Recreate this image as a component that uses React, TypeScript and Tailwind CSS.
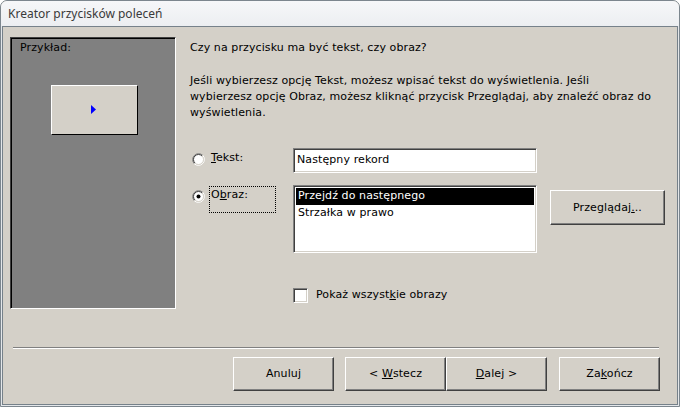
import React from 'react'

const ui = "font-['DejaVu_Sans',sans-serif] text-[11px] leading-[16px] tracking-[0.1px] text-black"

// classic 3D edges
const raised =
  'border border-t-white border-l-white border-r-[#404040] border-b-[#404040] shadow-[inset_-1px_-1px_0_#808080] bg-[#d4d0c8]'
const sunken =
  'border border-t-[#808080] border-l-[#808080] border-r-white border-b-white shadow-[inset_1px_1px_0_#404040,inset_-1px_-1px_0_#d4d0c8]'

function Radio({ checked }: { checked?: boolean }) {
  const d = 4.24
  return (
    <svg width="13" height="13" viewBox="0 0 13 13" className="block">
      <circle cx="6.5" cy="6.5" r="5" fill="#fff" />
      <path d={`M${6.5 - d} ${6.5 + d}A6 6 0 0 1 ${6.5 + d} ${6.5 - d}`} stroke="#808080" fill="none" />
      <path d={`M${6.5 + d} ${6.5 - d}A6 6 0 0 1 ${6.5 - d} ${6.5 + d}`} stroke="#ffffff" fill="none" />
      <path d={`M${6.5 - 3.54} ${6.5 + 3.54}A5 5 0 0 1 ${6.5 + 3.54} ${6.5 - 3.54}`} stroke="#404040" fill="none" />
      <path d={`M${6.5 + 3.54} ${6.5 - 3.54}A5 5 0 0 1 ${6.5 - 3.54} ${6.5 + 3.54}`} stroke="#d4d0c8" fill="none" />
      {checked && <circle cx="6.5" cy="6.5" r="2" fill="#000" />}
    </svg>
  )
}

function Button({ children, className = '' }: { children: React.ReactNode; className?: string }) {
  return (
    <div className={`${raised} flex h-[34px] w-[101px] items-center justify-center ${className}`}>
      <span>{children}</span>
    </div>
  )
}

export default function App() {
  return (
    <div className={`${ui} flex h-[407px] w-[680px] flex-col overflow-hidden rounded-t-[7px] border border-[#7c868e] bg-[#d4d0c8]`}>
      {/* title bar */}
      <div className="flex h-[25px] shrink-0 items-center bg-gradient-to-b from-[#f6f7f9] to-[#eceef1] pl-[7px] font-['Noto_Sans',sans-serif] text-[12px] tracking-normal text-[#3a3a3a]">
        Kreator przycisków poleceń
      </div>

      <div className="flex flex-1 flex-col border-x border-b border-[#e4e7ea]">
        <div className="flex flex-1 flex-col border border-[#76818a] pl-[7px] pt-[10px]">
          <div className="flex h-[272px]">
            {/* preview */}
            <div className="flex w-[166px] flex-col border border-t-[#404040] border-l-[#404040] border-r-white border-b-white bg-[#808080] shadow-[inset_1px_1px_0_#000] pl-[9px] pt-[2px]">
              <div>Przykład:</div>
              <div className="ml-[31px] mt-[29px] flex h-[50px] w-[87px] items-center justify-center border border-t-white border-l-white border-r-black border-b-black bg-[#d4d0c8]">
                <svg width="5" height="9" viewBox="0 0 5 9" className="-ml-[2px] -mt-[2px]">
                  <path d="M0 0L5 4.5L0 9Z" fill="#0000ff" />
                </svg>
              </div>
            </div>

            {/* options */}
            <div className="ml-[14px] flex flex-col pt-[3px]">
              <div>Czy na przycisku ma być tekst, czy obraz?</div>
              <div className="mt-[17px] whitespace-nowrap">
                Jeśli wybierzesz opcję Tekst, możesz wpisać tekst do wyświetlenia. Jeśli
                <br />
                wybierzesz opcję Obraz, możesz kliknąć przycisk Przeglądaj, aby znaleźć obraz do
                <br />
                wyświetlenia.
              </div>

              <div className="mt-[27px] flex items-start pl-[2px]">
                <div className="mt-[5px]">
                  <Radio />
                </div>
                <div className="ml-[4px] mt-[2px] w-[67px] pl-[2px]">
                  <span className="underline">T</span>ekst:
                </div>
                <div className={`${sunken} ml-[17px] h-[25px] w-[244px] bg-white pl-[3px] pt-[3px]`}>
                  Następny rekord
                </div>
              </div>

              <div className="mt-[12px] flex items-start pl-[2px]">
                <div className="mt-[5px]">
                  <Radio checked />
                </div>
                <div className="ml-[4px] mt-[1px] h-[27px] w-[67px] border border-dotted border-black pl-[1px]">
                  O<span className="underline">b</span>raz:
                </div>
                <div className={`${sunken} ml-[17px] h-[68px] w-[244px] bg-white p-[2px]`}>
                  <div className="h-[17px] bg-black pl-[2px] text-white">Przejdź do następnego</div>
                  <div className="h-[17px] pl-[2px]">Strzałka w prawo</div>
                </div>
                <div className={`${raised} ml-[13px] mt-[5px] flex h-[35px] w-[115px] items-center justify-center`}>
                  <span>
                    Przeglądaj<span className="underline">.</span>..
                  </span>
                </div>
              </div>

              <div className="ml-[103px] mt-[34px] flex items-center">
                <div className={`${sunken} h-[15px] w-[15px] bg-white`} />
                <div className="ml-[8px]">
                  Pokaż wszyst<span className="underline">k</span>ie obrazy
                </div>
              </div>
            </div>
          </div>

          {/* separator */}
          <div className="ml-[3px] mt-[38px] h-[2px] w-[646px] border-t border-b border-t-[#808080] border-b-white" />

          {/* buttons */}
          <div className="mt-[8px] flex pl-[223px]">
            <Button>Anuluj</Button>
            <Button className="ml-[11px]">
              &lt; <span className="underline">W</span>stecz
            </Button>
            <Button>
              <span className="underline">D</span>alej &gt;
            </Button>
            <Button className="ml-[12px]">
              Za<span className="underline">k</span>ończ
            </Button>
          </div>
        </div>
      </div>
    </div>
  )
}
